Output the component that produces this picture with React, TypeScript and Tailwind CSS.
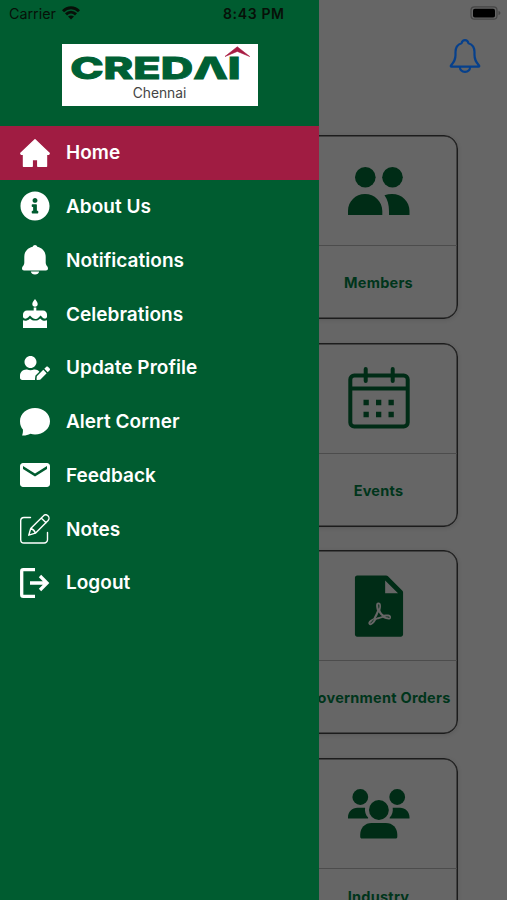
import { AiFillFilePdf } from "react-icons/ai";
import { FaInfoCircle, FaUserEdit } from "react-icons/fa";
import { MdEmail } from "react-icons/md";

const HomeIcon = () => (
  <svg viewBox="0 0 30 28" className="mt-px w-[30px] h-[28px]" fill="currentColor" stroke="currentColor" strokeWidth="1.400" strokeLinejoin="round">
    <path d="M15 .8L.8 14.300l.4 1h2.300v11.900h8.700v-6.600h5.600v6.600h8.700V15.300h2.300l.4-1-4.300-4.100z" />
  </svg>
);

const BellIcon = () => (
  <svg viewBox="0 0 26 30" className="w-[26px] h-[30px]" fill="currentColor">
    <path d="M13 0c1.100 0 1.900.7 2.300 1.800 5 1 8.400 4.800 8.400 10.200v5.500c0 1.600.5 2.500 1.500 3.800.5.700.8 1.300.8 2.200 0 1.200-.8 1.900-2 1.900H2c-1.200 0-2-.7-2-1.900 0-.9.3-1.500.8-2.200 1-1.300 1.500-2.200 1.500-3.800V12C2.300 6.600 5.700 2.800 10.700 1.800 11.100.7 11.900 0 13 0zM8.800 26.500h8.400c-.4 1.900-1.900 3-4.200 3s-3.800-1.100-4.200-3z" />
  </svg>
);

const CakeIcon = () => (
  <svg viewBox="0 0 24 29" className="w-[24px] h-[29px]" fill="currentColor">
    <path d="M12 0c1.200 1.700 2.700 3.200 2.700 5S13.500 7.800 12 7.800 9.300 6.800 9.300 5 10.800 1.700 12 0z" />
    <path d="M10.700 8.500h2.600v3H20c2.300 0 4 1.700 4 4v2.600c-.5 1-1.300 1.500-2.200 1.500-1 0-1.600-.5-2.300-1.200l-1.900-1.800-2 1.900c-2 2-4.700 2-6.600.1l-2-2-2 1.900c-1.600 1.700-4.200 1.500-5-.4v-2.600c0-2.300 1.700-4 4-4h6.700z" />
    <path d="M0 21.200c2 .9 4.500.5 6.200-1l.8-.8c3 3 7.300 2.900 10.100 0l.9.800c1.700 1.600 4 1.900 6 1V29H0z" />
  </svg>
);

const ChatIcon = () => (
  <svg viewBox="0 0 30 28" className="mt-px w-[30px] h-[28px]" fill="currentColor">
    <path d="M15 0C6.700 0 0 5.800 0 13.200c0 3.900 1.200 6.300 2.900 8.300.2 2-.1 3.900-.8 6 3.300.2 5.600-.4 8.400-1.700 1.400.4 2.900.6 4.500.6 8.300 0 15-5.900 15-13.200S23.300 0 15 0z" />
  </svg>
);

const NoteIcon = () => (
  <svg viewBox="0 0 30 30" className="w-[30px] h-[30px]" fill="none" stroke="currentColor" strokeWidth="1.400" strokeLinecap="round" strokeLinejoin="round">
    <path d="M10.500 3.500H4a3.300 3.300 0 0 0-3.300 3.300v18.900A3.300 3.300 0 0 0 4 29h20.200a3.300 3.300 0 0 0 3.300-3.300v-7.200" />
    <path d="M8.800 21.200l1.900-6.700L23.300 1.900a3.200 3.200 0 0 1 4.800 4.500L15.400 19.200zM10.700 14.500c2 .6 4 2.500 4.700 4.700M21.200 4l4.900 4.700" />
  </svg>
);

const LogoutIcon = () => (
  <svg viewBox="0 0 30 30" className="w-[30px] h-[30px]" fill="none" stroke="currentColor" strokeWidth="3.300">
    <path d="M15 1.700H3.300a1.600 1.600 0 0 0-1.600 1.600v23.400a1.600 1.600 0 0 0 1.600 1.600H15" />
    <path d="M10 15h17M20 8l7 7-7 7" />
  </svg>
);

const MembersIcon = () => (
  <svg viewBox="0 0 62 48" className="w-[62px] h-[48px]" fill="currentColor">
    <circle cx="17.300" cy="10.300" r="10.300" />
    <circle cx="44.500" cy="10.300" r="10.300" />
    <path d="M0 48v-4c0-9.500 7.500-17 17-17s17.300 7.500 17.300 17v4zM36.500 28.200c2.400-.8 4.900-1.200 7.500-1.200 9.900 0 17.500 7.500 17.500 17v4H41v-4c0-6-1.300-11.200-4.500-15.800z" />
  </svg>
);

const CalendarIcon = () => (
  <svg viewBox="0 0 62 62" className="w-[62px] h-[62px]" fill="none" stroke="currentColor" strokeWidth="4">
    <rect x="2.300" y="8.500" width="57.400" height="51" rx="4" />
    <path d="M2 21.500h58" />
    <path d="M17.700 2v12M44.700 2v12" strokeLinecap="round" />
    <path d="M15.500 35.500h5.300m7.200 0h5.300m7.200 0h5.300M15.500 47.500h5.300m7.200 0h5.300m7.200 0h5.300" strokeWidth="5.300" />
  </svg>
);

const GroupIcon = () => (
  <svg viewBox="0 0 62 50" className="w-[62px] h-[50px]" fill="currentColor">
    <circle cx="12.300" cy="8" r="7.900" />
    <circle cx="49.200" cy="8" r="7.900" />
    <circle cx="30.900" cy="21" r="9.900" />
    <path d="M0 29.500v-1.300c0-5.500 4.200-9.500 9.500-9.500h7.600c-.5 3.600.4 7 3 9.900v.9H1.200c-.8 0-1.200 0-1.200 0zM61.500 29.500v-1.300c0-5.500-4.200-9.500-9.500-9.500h-7.300c.5 3.600-.4 7-3 9.900v.9z" />
    <path d="M14 49.500c-1.100 0-1.800-.7-1.800-1.800v-1.900c0-7 4.700-11.800 11.500-11.800h14.100c6.800 0 11.500 4.800 11.500 11.800v1.900c0 1.100-.7 1.800-1.800 1.800z" />
  </svg>
);

const menuItems = [
  { name: "Home", icon: <HomeIcon /> },
  { name: "About Us", icon: <FaInfoCircle size={30} /> },
  { name: "Notifications", icon: <BellIcon /> },
  { name: "Celebrations", icon: <CakeIcon /> },
  { name: "Update Profile", icon: <FaUserEdit size={30} className="mt-px" /> },
  { name: "Alert Corner", icon: <ChatIcon /> },
  { name: "Feedback", icon: <MdEmail size={36} /> },
  { name: "Notes", icon: <NoteIcon /> },
  { name: "Logout", icon: <LogoutIcon /> },
];

const cards = [
  { name: "Members", icon: <MembersIcon /> },
  { name: "Events", icon: <CalendarIcon /> },
  { name: "Government Orders", icon: <AiFillFilePdf size={70} /> },
  { name: "Industry", icon: <GroupIcon />, raised: true },
];

const Logo = () => (
  <div className="flex h-[62px] w-[196px] flex-col items-center bg-white pt-[2px]">
    <svg viewBox="0 0 182 36" className="h-[36px] w-[182px] shrink-0">
      <text x="1.200" y="33.300" textLength="170.500" lengthAdjust="spacingAndGlyphs" fontFamily="Inter, sans-serif" fontWeight="800" fontSize="30.500" fill="#006034" stroke="#006034" strokeWidth=".9">
        CREDΛI
      </text>
      <path d="M156 10.500l12.300-9.700 12.400 9.700-12.400-5.100z" fill="#a81c43" stroke="#a81c43" strokeWidth=".6" />
    </svg>
    <span className="text-[13.8px] leading-[22px] text-[#444]">Chennai</span>
  </div>
);

function StatusBar() {
  return (
    <div className="absolute inset-x-0 top-0 z-20 flex h-[27px] items-center text-[#071008]">
      <div className="flex w-[223px] items-center gap-1.5 pl-[9px]">
        <span className="text-[14.3px]">Carrier</span>
        <svg viewBox="0 0 18 14" className="-mt-[2px] h-[14px] w-[18px]" fill="none" stroke="currentColor" strokeWidth="2.900">
          <path d="M1 5.300C5.500.6 12.500.6 17 5.300M4 8.400c2.900-2.900 7.100-2.900 10 0" />
          <path d="M6 10.500c1.800-1.500 4.200-1.500 6 0L9 13.500z" fill="currentColor" stroke="none" />
        </svg>
      </div>
      <span className="text-[14px] font-semibold tracking-[0.65px]">8:43 PM</span>
      <svg viewBox="0 0 31 14" className="ml-auto mr-[6px] -mt-[1px] h-[14px] w-[31px]">
        <rect x="1" y=".8" width="26" height="12.400" rx="3.500" fill="none" stroke="#454545" strokeWidth="1.200" />
        <rect x="3" y="2.700" width="22" height="8.800" rx="1.800" fill="#000" />
        <path d="M28.500 5v4c1.200-.4 1.900-1.100 1.900-2s-.7-1.600-1.900-2z" fill="#454545" />
      </svg>
    </div>
  );
}

export default function App() {
  return (
    <div className="relative h-[900px] w-full overflow-hidden bg-[#666] font-['Inter',sans-serif]">
      <StatusBar />

      {/* Dimmed home screen */}
      <main className="flex flex-col items-end">
        <header className="flex h-[135px] pr-[26px] pt-[38px] text-[#06408c]">
          <svg viewBox="0 0 32 36" className="h-[36px] w-[32px]" fill="none" stroke="currentColor" strokeWidth="2.200" strokeLinejoin="round">
            <path d="M2 27.500C5 24 6.500 22 6.500 17v-3c0-4.500 2-7.500 6-8.800C13 3.300 14.200 2.200 16 2.200s3 1.100 3.500 3c4 1.300 6 4.300 6 8.800v3c0 5 1.500 7 4.500 10.500.5.700.3 1.200-.5 1.200h-27c-.8 0-1-.5-.5-1.200z" />
            <path d="M10.800 29c.3 3 2.300 4.800 5.200 4.800s4.900-1.800 5.200-4.800" />
          </svg>
        </header>
        <div className="flex flex-col gap-[23.7px] pr-[49px]">
          {cards.map((card) => (
            <div key={card.name} className="flex h-[184px] w-[160px] flex-col rounded-[14px] border border-[#1c1c1c] shadow-[inset_0_0_0_0.5px_#1c1c1c,0_1px_4px_rgba(0,0,0,0.12)]">
              <div className="flex h-[110px] items-center justify-center border-b border-[#4c4c4c] pl-px text-[#002c16]">
                {card.icon}
              </div>
              <div
                className={`flex flex-1 items-center justify-center whitespace-nowrap pl-px pt-[2px] text-[14.5px] leading-[18px] font-bold tracking-[0.25px] text-[#00351b] ${card.raised ? "pb-[18px]" : ""}`}
              >
                {card.name}
              </div>
            </div>
          ))}
        </div>
      </main>

      {/* Drawer */}
      <aside className="absolute inset-y-0 left-0 z-10 w-[319px] bg-[#005c30]">
        <div className="flex h-[125.8px] justify-center pt-[44px]">
          <Logo />
        </div>
        <nav>
          {menuItems.map((item) => (
            <a
              key={item.name}
              className={`flex h-[53.75px] items-center text-white ${item.name === "Home" ? "bg-[#a01c42]" : ""}`}
            >
              <span className="ml-[15px] flex w-[40px] justify-center">{item.icon}</span>
              <span className="ml-[11px] pt-[2px] text-[19px] font-semibold tracking-[0.03px]">{item.name}</span>
            </a>
          ))}
        </nav>
      </aside>
    </div>
  );
}
